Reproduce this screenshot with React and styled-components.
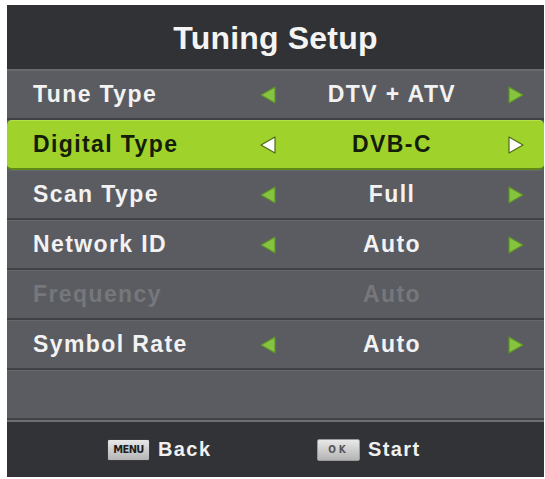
import React from 'react';
import styled, { createGlobalStyle } from 'styled-components';

const GlobalStyle = createGlobalStyle`
  body {
    margin: 0;
    background: #ffffff;
    font-family: "Liberation Sans", Arial, sans-serif;
  }
`;

const rows = [
  { label: 'Tune Type', value: 'DTV + ATV' },
  { label: 'Digital Type', value: 'DVB-C', selected: true },
  { label: 'Scan Type', value: 'Full' },
  { label: 'Network ID', value: 'Auto' },
  { label: 'Frequency', value: 'Auto', disabled: true },
  { label: 'Symbol Rate', value: 'Auto' },
];

const Arrow = ({ dir, selected }) => {
  const fill = selected ? '#ffffff' : '#86c43f';
  const stroke = selected ? '#4d6a14' : '#5f8f2a';
  const points = dir === 'left' ? '16,1 16,17 2,9' : '2,1 2,17 16,9';
  return (
    <ArrowSvg viewBox="0 0 18 18">
      <polygon points={points} fill={fill} stroke={stroke} strokeWidth="1.2" strokeLinejoin="round" />
    </ArrowSvg>
  );
};

const App = () => {
  return (
    <>
      <GlobalStyle />
      <Panel>
        <Title>Tuning Setup</Title>
        {rows.map((r) => (
          <Row key={r.label} $selected={r.selected}>
            <Label $selected={r.selected} $disabled={r.disabled}>{r.label}</Label>
            <ArrowCell>{!r.disabled && <Arrow dir="left" selected={r.selected} />}</ArrowCell>
            <Value $selected={r.selected} $disabled={r.disabled}>{r.value}</Value>
            <ArrowCell>{!r.disabled && <Arrow dir="right" selected={r.selected} />}</ArrowCell>
          </Row>
        ))}
        <Row />
        <Footer>
          <Hint $width="210px">
            <Key $menu>MENU</Key>
            <HintText>Back</HintText>
          </Hint>
          <Hint>
            <Key>OK</Key>
            <HintText>Start</HintText>
          </Hint>
        </Footer>
      </Panel>
    </>
  );
};

const Panel = styled.div`
  width: 537px;
  height: 472px;
  margin: 5px 0 0 7px;
  background: #5b5c61;
  display: flex;
  flex-direction: column;
  overflow: hidden;
`;

const Title = styled.div`
  height: 65px;
  flex: none;
  background: #313235;
  border-bottom: 1px solid #6a6b6f;
  display: flex;
  align-items: center;
  justify-content: center;
  color: #f4f4f4;
  font-size: 32px;
  font-weight: bold;
  letter-spacing: 0.2px;
  padding-top: 2px;
  box-sizing: border-box;
`;

const Row = styled.div`
  height: 50px;
  flex: none;
  box-sizing: border-box;
  display: grid;
  grid-template-columns: 1fr 18px 230px 18px;
  align-items: center;
  padding: 0 19px 0 26px;
  background: ${(p) => (p.$selected ? '#a0d22c' : '#5b5c61')};
  border-top: 1px solid ${(p) => (p.$selected ? '#b4e04a' : '#66676b')};
  border-bottom: 2px solid ${(p) => (p.$selected ? '#5f8a18' : '#404145')};
  border-radius: ${(p) => (p.$selected ? '5px' : '0')};
`;

const Label = styled.div`
  font-size: 23px;
  font-weight: bold;
  letter-spacing: 1.4px;
  color: ${(p) => (p.$selected ? '#141d07' : p.$disabled ? '#76777b' : '#f2f2f2')};
  white-space: nowrap;
`;

const Value = styled(Label)`
  text-align: center;
`;

const ArrowCell = styled.div`
  display: flex;
  align-items: center;
  width: 18px;
  height: 18px;
`;

const ArrowSvg = styled.svg`
  display: block;
  flex: none;
  width: 18px;
  height: 18px;
`;

const Footer = styled.div`
  flex: 1;
  background: #323336;
  border-top: 2px solid #6d6e72;
  display: flex;
  align-items: center;
  padding-left: 100px;
`;

const Hint = styled.div`
  display: flex;
  align-items: center;
  gap: 8px;
  width: ${(p) => p.$width || 'auto'};
`;

const Key = styled.div`
  width: 43px;
  height: 22px;
  box-sizing: border-box;
  display: flex;
  align-items: center;
  justify-content: center;
  background: linear-gradient(#e8e8e8, #b4b4b4);
  border: 1px solid ${(p) => (p.$menu ? '#3a3a3a' : '#9a9a9a')};
  border-radius: 2px;
  font-family: "DejaVu Sans Condensed", "Liberation Sans", sans-serif;
  font-weight: bold;
  font-size: ${(p) => (p.$menu ? '11px' : '10px')};
  letter-spacing: ${(p) => (p.$menu ? '-0.6px' : '3px')};
  color: ${(p) => (p.$menu ? '#1e1e1e' : '#555555')};
`;

const HintText = styled.span`
  font-size: 20px;
  font-weight: bold;
  letter-spacing: 1.4px;
  color: #f0f0f0;
`;

export default App;
